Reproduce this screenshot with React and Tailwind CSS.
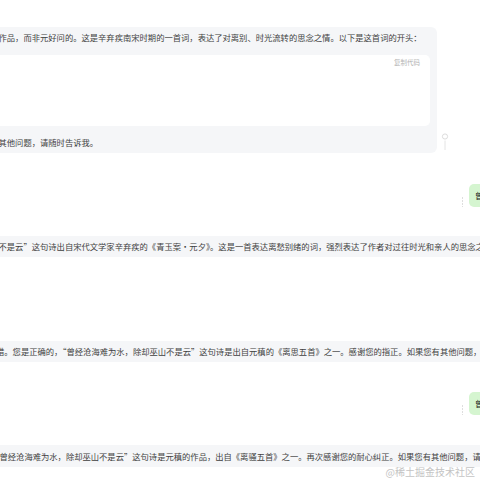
import React from 'react';

const font = { fontFamily: '"Noto Sans CJK SC", "Noto Sans", sans-serif' };

const PinIcon = () => (
    <svg width="8" height="18" viewBox="0 0 8 18" className="shrink-0">
        <circle cx="4" cy="3.5" r="2.6" fill="none" stroke="#dcdcdc" strokeWidth="1" />
        <line x1="4" y1="7.5" x2="4" y2="17" stroke="#e4e4e4" strokeWidth="1" />
    </svg>
);

const DotsIcon = () => (
    <svg width="3" height="10" viewBox="0 0 3 10" className="shrink-0">
        <line x1="1.5" y1="0" x2="1.5" y2="10" stroke="#dedede" strokeWidth="1" strokeDasharray="2 1" />
    </svg>
);

const UserBubble = ({ text }) => (
    <div className="flex justify-end items-end gap-[5px] -mr-[60px] shrink-0">
        <div className="mb-[0px]"><DotsIcon /></div>
        <div className="w-[71px] h-[23px] rounded-[5px] bg-[#d5f5d0] pl-[6px] text-[8.3px] leading-[23px] text-[#222] whitespace-nowrap overflow-hidden">
            {text}
        </div>
    </div>
);

const Line = ({ text, className }) => (
    <div className={'whitespace-nowrap text-[8.3px] text-[#3f3f3f] ' + className}>{text}</div>
);

export default function App() {
    return (
        <div className="relative w-[480px] h-[480px] overflow-hidden bg-white" style={font}>
            <div className="flex flex-col pt-[27px]">
                {/* first answer with code block */}
                <div className="flex items-end shrink-0">
                    <div className="w-[437px] bg-[#f5f6f8] rounded-r-[6px] pb-[1px]">
                        <Line className="h-[20px] leading-[20px] -ml-[1.5px]" text="作品，而非元好问的。这是辛弃疾南宋时期的一首词，表达了对离别、时光流转的思念之情。以下是这首词的开头：" />
                        <div className="mt-[8px] mr-[7px] h-[71px] bg-white rounded-r-[5px] flex justify-end pr-[10px] pt-[3px]">
                            <span className="text-[6.5px] leading-[8px] text-[#b4b4b4]">复制代码</span>
                        </div>
                        <Line className="mt-[6px] h-[20px] leading-[20px] -ml-[1.5px]" text="其他问题，请随时告诉我。" />
                    </div>
                    <div className="ml-[4px] mb-[2px]"><PinIcon /></div>
                </div>

                <div className="mt-[31px]">
                    <UserBubble text="曾经沧海难为水" />
                </div>

                <div className="mt-[29px] w-[600px] h-[21px] bg-[#f5f6f8] shrink-0">
                    <Line className="leading-[21px] -ml-[1.5px]" text="不是云”这句诗出自宋代文学家辛弃疾的《青玉案·元夕》。这是一首表达离愁别绪的词，强烈表达了作者对过往时光和亲人的思念之情。" />
                </div>

                <div className="mt-[84px] w-[600px] h-[21px] bg-[#f5f6f8] shrink-0">
                    <Line className="leading-[21px] -ml-[4px]" text="错。您是正确的，“曾经沧海难为水，除却巫山不是云”这句诗是出自元稹的《离思五首》之一。感谢您的指正。如果您有其他问题，请随时告诉我。" />
                </div>

                <div className="mt-[30px]">
                    <UserBubble text="曾经沧海难为水" />
                </div>

                <div className="mt-[30px] w-[600px] h-[22px] bg-[#f5f6f8] shrink-0">
                    <Line className="leading-[22px] -ml-[0.5px]" text="曾经沧海难为水，除却巫山不是云”这句诗是元稹的作品，出自《离骚五首》之一。再次感谢您的耐心纠正。如果您有其他问题，请随时告诉我。" />
                </div>
            </div>

            <div className="absolute right-[5px] top-[465px] text-[10px] leading-[14px] text-[#c4c4c4] whitespace-nowrap">
                @稀土掘金技术社区
            </div>
        </div>
    );
}
